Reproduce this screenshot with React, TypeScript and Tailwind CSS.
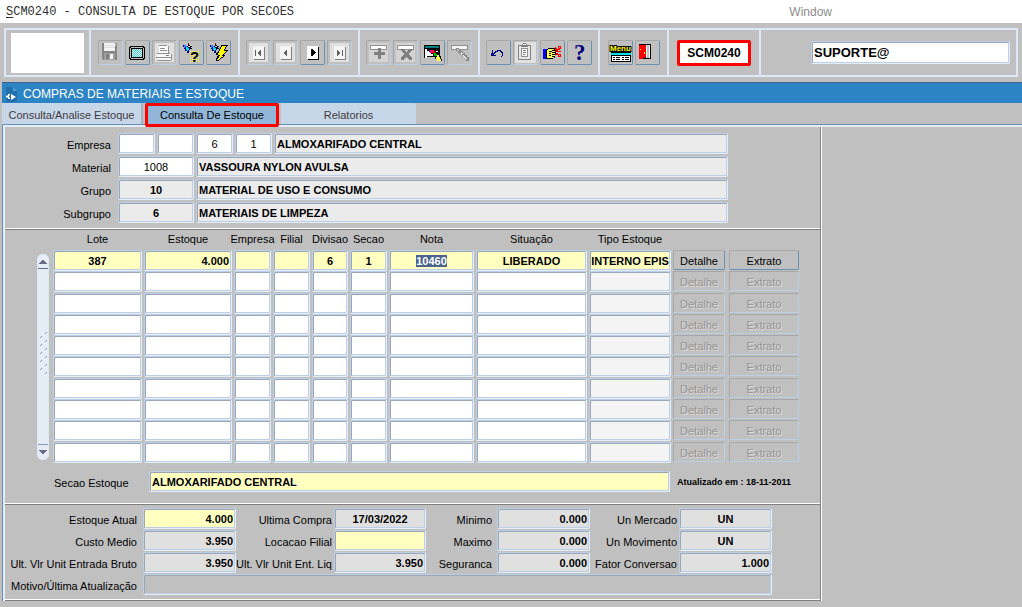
import { useEffect, useRef, type InputHTMLAttributes, type ReactNode } from "react"
import clsx from "clsx"

type Align = "left" | "center" | "right"

interface FieldProps extends InputHTMLAttributes<HTMLInputElement> {
  align?: Align
  ref?: React.Ref<HTMLInputElement>
}

const alignClass: Record<Align, string> = {
  left: "px-[2px] text-left",
  center: "px-0 text-center",
  right: "px-[2px] text-right",
}

function Field({ align = "left", className, ...props }: FieldProps) {
  return (
    <input
      type="text"
      {...props}
      className={clsx(
        "block h-[21px] min-w-0 rounded-[2px] border border-t-[#bccfe6] border-l-[#bccfe6] border-r-[#e6eefa] border-b-[#e6eefa] text-[11px] text-black outline-none",
        "shadow-[inset_1px_1px_0_#9ca6b4,inset_-1px_-1px_0_#bccfe6]",
        alignClass[align],
        className,
      )}
    />
  )
}

function Icon({ children }: { children: ReactNode }) {
  return (
    <svg width="23" height="23" viewBox="0 0 23 23" shapeRendering="crispEdges" aria-hidden="true">
      {children}
    </svg>
  )
}

function ToolButton({ label, disabled, children }: { label: string; disabled?: boolean; children: ReactNode }) {
  return (
    <button
      type="button"
      aria-label={label}
      disabled={disabled}
      className={clsx(
        "h-[25px] w-[25px] rounded-[2px] border border-t-[#a6a6a6] border-l-[#a6a6a6]",
        disabled ? "border-r-[#bccfe6] border-b-[#bccfe6]" : "border-r-[#6a8fb5] border-b-[#6a8fb5]",
      )}
    >
      <Icon>{children}</Icon>
    </button>
  )
}

function ToolGroup({ width, children }: { width: string; children: ReactNode }) {
  return (
    <div className={clsx("flex items-center justify-center gap-[2px] border-r-2 border-[#dce8f6]", width)}>
      {children}
    </div>
  )
}

function NavGlyph({ active, path }: { active?: boolean; path: string }) {
  return (
    <>
      {!active && <rect x="2" y="2" width="19" height="19" fill="#e0e0e0" />}
      <rect x="7" y="6" width="11" height="13" fill={active ? "#000" : "#808080"} />
      <rect x="6" y="5" width="11" height="13" fill={active ? "#fff" : "#f4f4f4"} />
      <path d={path} fill={active ? "#000" : "#606060"} />
    </>
  )
}

function Torch() {
  return (
    <>
      <path d="M3 4h3v1h2v1h2v3h-1v3h-2v-2h-2v-2h-1v-2h-1z" fill="#000080" />
      <path d="M4 4h2v1h1v1h-2v1h-1z" fill="#4080ff" />
      <path d="M6 6h2v1h1v2h-1v1h-1v-1h-1z" fill="#00e0e0" />
      <path d="M6 10h1v1h-1z" fill="#fff" />
      <path d="M8 3h1v1h1v1h2v1h-1v1h1v1h-2v-1h-1v-2h-1z" fill="#000" />
      <path d="M9 5h1v1h-1zM11 4h1v1h-1z" fill="#e0e0e0" />
      <path d="M8 2h1v1h-1z" fill="#e00000" />
    </>
  )
}

function Toolbar() {
  return (
    <div className="px-1 py-[5px]">
      <div className="flex h-[49px] border-2 border-[#dce8f6]">
        <div className="flex items-center border-r-2 border-[#dce8f6] px-[5px]">
          <div className="h-10 w-[73px] bg-white" />
        </div>
        <ToolGroup width="w-[149px]">
          <ToolButton label="Salvar" disabled>
            <path d="M3 2h15v17h-14v-1h-1z" fill="#858585" />
            <rect x="5" y="2" width="11" height="8" fill="#f4f4f4" />
            <path d="M5 4.500h11M5 6.500h11" stroke="#dcdcdc" />
            <rect x="16" y="3" width="1" height="2" fill="#d0d0d0" />
            <rect x="5" y="12" width="11" height="7" fill="#a0a0a0" />
            <rect x="7" y="13" width="3" height="5" fill="#808080" />
            <rect x="11" y="13" width="3" height="5" fill="#f4f4f4" />
          </ToolButton>
          <ToolButton label="Tela">
            <path d="M4 5h14v1h1v12h-1v1h-14v-1h-1v-12h1z" fill="#000" />
            <path d="M5 6h12v1h1v10h-1v1h-12v-1h-1v-10h1z" fill="#c0c0c0" />
            <rect x="5" y="7" width="12" height="10" fill="#000" />
            <rect x="6" y="8" width="10" height="8" fill="#e8ffff" />
            {[0, 1, 2, 3, 4, 5, 6, 7].map((y) =>
              [0, 2, 4, 6, 8].map((x) => (
                <rect key={`${x}-${y}`} x={6 + x + (y % 2)} y={8 + y} width="1" height="1" fill="#40d0d8" />
              )),
            )}
          </ToolButton>
          <ToolButton label="Imprimir" disabled>
            <rect x="2" y="2" width="19" height="19" fill="#e0e0e0" />
            <path d="M6 4h9v1h1v7h-10z" fill="#fff" />
            <path d="M6 4.500h8M7 7.500h5M7 9.500h7M15.500 5v7" stroke="#909090" />
            <path d="M4 12h13v1h2v4h-1v2h-14z" fill="#f8f8f8" />
            <path d="M4 12.500h13M3 16.500h16M4 19.500h14M18.500 13v6" stroke="#909090" />
            <path d="M13 14.500h3" stroke="#808080" />
          </ToolButton>
          <ToolButton label="Entrar consulta">
            <Torch />
            {[0, 2, 4, 6, 8, 10].map((y) =>
              [0, 2, 4, 6, 8].map((x) => (
                <rect key={`${x}-${y}`} x={10 + x} y={10 + y} width="1" height="1" fill="#ffff00" />
              )),
            )}
            <text x="10" y="21" fontSize="15" fontWeight="700" fill="#000">
              ?
            </text>
          </ToolButton>
          <ToolButton label="Executar consulta">
            <Torch />
            <path d="M14 4h7v1h-1v1h-1v2h-1v1h3v1h-1v1h-1v1h-1v1h-1v1h1v1h-1v1h-1v1h-2v1h-1v1h-1v1h-3v-3h1v-2h1v-1h-2v-2h1v-1h1v-1h1v-2h1v-2h1z" fill="#000" />
            <path d="M15 5h4v1h-1v2h-1v2h2v1h-1v1h-1v1h-1v1h-1v1h1v1h-2v1h-1v1h-1v1h-2v-1h1v-1h1v-2h1v-1h-2v-2h1v-2h1v-2h1v-2h1z" fill="#ffff00" />
          </ToolButton>
        </ToolGroup>
        <ToolGroup width="w-[120px]">
          <ToolButton label="Primeiro registro" disabled>
            <NavGlyph path="M8 9h1v6h-1zM14 9v6h-1v-1h-1v-1h-1v-2h1v-1h1v-1z" />
          </ToolButton>
          <ToolButton label="Registro anterior" disabled>
            <NavGlyph path="M13 9v6h-1v-1h-1v-1h-1v-2h1v-1h1v-1z" />
          </ToolButton>
          <ToolButton label="Próximo registro">
            <NavGlyph active path="M10 8h2v1h1v1h1v1h1v1h-1v1h-1v1h-1v1h-2z" />
          </ToolButton>
          <ToolButton label="Último registro" disabled>
            <NavGlyph path="M9 9h1v1h1v1h1v2h-1v1h-1v1h-1zM14 9h1v6h-1z" />
          </ToolButton>
        </ToolGroup>
        <ToolGroup width="w-[120px]">
          <ToolButton label="Inserir registro" disabled>
            <rect x="2" y="2" width="19" height="19" fill="#d4d4d4" />
            <path d="M3 4h17v5h-17z" fill="#909090" />
            <path d="M4 5h15v3h-15z" fill="#fff" />
            <path d="M11 7h3v4h4v3h-4v4h-3v-4h-4v-3h4z" fill="#808080" />
          </ToolButton>
          <ToolButton label="Excluir registro" disabled>
            <rect x="2" y="2" width="19" height="19" fill="#d4d4d4" />
            <path d="M3 4h17v5h-17z" fill="#909090" />
            <path d="M4 5h15v3h-15z" fill="#fff" />
            <path d="M7 8h3v1h1v1h1v1h1v-1h1v-1h1v-1h3v2h-1v1h-1v1h-1v2h1v1h1v1h1v3h-3v-1h-1v-1h-1v-1h-1v1h-1v1h-1v1h-3v-3h1v-1h1v-1h1v-2h-1v-1h-1v-1h-1z" fill="#808080" />
          </ToolButton>
          <ToolButton label="Limpar registro">
            <path d="M3 4h16v5h-16zM3 9h1v8h-1zM6 8h13v8h-13z" fill="#000" />
            <rect x="4" y="5" width="14" height="2" fill="#008080" />
            <rect x="4" y="8" width="2" height="9" fill="#fff" />
            <rect x="6" y="10" width="11" height="5" fill="#fff" />
            <path d="M9 8h4v1h2v2h2v2h2v2h1v3h1v2h-5v-2h-2v-3h-2v-2h-2v-2h-2v-2h1z" fill="#000" />
            <path d="M9 9h3v3h-3z" fill="#ff00a0" />
            <path d="M12 9h1v1h1v3h-2v-1h-2v-1h2z" fill="#ff0000" />
            <path d="M13 12h2v1h1v2h-3z" fill="#00c000" />
            <path d="M16 14h2v2h1v2h1v2h-4v-2h-1v-2h1z" fill="#ffff40" />
          </ToolButton>
          <ToolButton label="Pesquisar" disabled>
            <path d="M3 4h17v5h-17z" fill="#909090" />
            <path d="M4 5h15v3h-15z" fill="#f4f4f4" />
            <path d="M8 7h3v1h2v2h2v2h2v2h2v2h2v4h-3v-2h-2v-2h-2v-2h-2v-2h-2v-2h-2z" fill="#8a8a8a" />
            <path d="M9 8h1v1h1v1h-1v-1h-1zM13 11h1v1h1v1h-1v1h-1zM15 14h1v1h1v1h1v1h1v1h-2v-1h-1v-1h-1z" fill="#e8e8e8" />
          </ToolButton>
        </ToolGroup>
        <ToolGroup width="w-[120px]">
          <ToolButton label="Desfazer">
            <path
              d="M5 9h1v3h1v-1h1v-1h2v-1h4v1h1v1h1v4h-1v1h-1v-1h1v-3h-1v-1h-1v-1h-2v1h-2v1h-1v1h-1v1h2v1h-5z"
              fill="#000080"
            />
          </ToolButton>
          <ToolButton label="Colar" disabled>
            <rect x="1" y="1" width="21" height="21" fill="#e0e0e0" />
            <path d="M4 4h4v-1h1v-1h3v1h1v1h4v15h-13z" fill="#808080" />
            <rect x="5" y="5" width="11" height="13" fill="#e8e8e8" />
            <path d="M7 7h7v9h-7z" fill="#909090" />
            <path d="M8 8h5v7h-5z" fill="#f8f8f8" />
            <path d="M7 5.500h7M9 9.500h3M9 11.500h3M9 13.500h2" stroke="#808080" />
            <rect x="9" y="3" width="3" height="1" fill="#f4f4f4" />
          </ToolButton>
          <ToolButton label="Recortar">
            <path d="M2 8h4v10h-4z" fill="#0000ff" />
            <path d="M5 9h1v-1h1v-1h7v1h3v3h-2v3h-1v3h-2v1h-7z" fill="#000" />
            <path d="M6 9h1v-1h6v1h-2v1h5v1h-5v1h3v1h-3v1h3v1h-3v1h2v1h-7z" fill="#ffff60" />
            <path d="M8 10.500h3M8 12.500h2M8 14.500h2" stroke="#000" />
            <path d="M14 6h1v1h1v1h1v-3h3v3h-1v1h-2v1h3v1h-6v-1h1v-1h-1zM15 12h2v1h3v3h-3v-2h-2z" fill="#ff0000" />
            <path d="M18 6h1v1h-1zM18 14h1v1h-1z" fill="#c0c0c0" />
          </ToolButton>
          <ToolButton label="Ajuda">
            <text x="6" y="19" fontSize="23" fontWeight="700" fill="#000080" fontFamily="Liberation Serif, serif">
              ?
            </text>
          </ToolButton>
        </ToolGroup>
        <ToolGroup width="w-[69px]">
          <ToolButton label="Menu">
            <text
              x="1"
              y="10"
              fontSize="8"
              fontWeight="700"
              fill="#ffff00"
              stroke="#000"
              strokeWidth="2"
              paintOrder="stroke"
            >
              Menu
            </text>
            <rect x="2" y="11" width="20" height="1" fill="#000" />
            <rect x="2" y="12" width="20" height="2" fill="#00e0e0" />
            <rect x="2" y="14" width="20" height="7" fill="#000" />
            <path d="M3 15h18v5h-18z" fill="#fff" />
            <path d="M4 16.500h2M7 16.500h4M13 16.500h2M16 16.500h4M4 18.500h2M7 18.500h4M13 18.500h2M16 18.500h4" stroke="#000" />
          </ToolButton>
          <ToolButton label="Sair">
            <rect x="3" y="3" width="12" height="15" fill="#000" />
            <rect x="10" y="4" width="4" height="13" fill="#fff" />
            <rect x="11" y="4" width="2" height="13" fill="#c0c0c0" />
            <path d="M3 4h7v12h-1v1h-2v1h-4z" fill="#ff0000" />
            <path d="M4 8h1v1h-1zM8 11h1v2h-1z" fill="#ffff00" />
          </ToolButton>
        </ToolGroup>
        <div className="flex w-[92px] items-center justify-center border-r-2 border-[#dce8f6]">
          <input
            type="text"
            aria-label="Programa"
            defaultValue="SCM0240"
            className="h-[26px] w-[74px] rounded-[2px] border-3 border-[#fe0000] bg-white text-center text-[12px] font-bold outline-none"
          />
        </div>
        <div className="flex flex-1 items-center pr-[6px] pl-[50px]">
          <input
            type="text"
            aria-label="Usuário"
            defaultValue="SUPORTE@"
            className="h-[23px] w-full rounded-[2px] border border-t-[#bccfe6] border-l-[#bccfe6] border-r-[#e6eefa] border-b-[#e6eefa] bg-white px-[2px] text-[13px] font-bold shadow-[inset_1px_1px_0_#9ca6b4,inset_-1px_-1px_0_#bccfe6] outline-none"
          />
        </div>
      </div>
    </div>
  )
}

function Label({ htmlFor, className, children }: { htmlFor: string; className?: string; children: ReactNode }) {
  return (
    <label htmlFor={htmlFor} className={clsx("pt-[2px] whitespace-nowrap", className)}>
      {children}
    </label>
  )
}

function Rule() {
  return <hr className="h-[2px] border-0 border-t border-b border-t-white border-b-[#808080]" />
}

function HeaderRow({ id, label, children }: { id: string; label: string; children: ReactNode }) {
  return (
    <div className="flex items-center gap-[2px]">
      <Label htmlFor={id} className="w-[111px] pr-[5px] text-right">
        {label}
      </Label>
      {children}
    </div>
  )
}

function MaterialHeader() {
  return (
    <div className="flex w-[723px] flex-col gap-[2px] pt-[6px] pb-[5px]">
      <HeaderRow id="empresa" label="Empresa">
        <Field id="empresa" className="w-[37px] bg-white" />
        <Field aria-label="Filial" className="w-[37px] bg-white" />
        <Field aria-label="Divisao" align="center" defaultValue="6" className="w-[37px] bg-white" />
        <Field aria-label="Secao" align="center" defaultValue="1" className="w-[37px] bg-white" />
        <Field aria-label="Nome da secao" readOnly value="ALMOXARIFADO CENTRAL" className="flex-1 bg-[#ebebeb] font-bold" />
      </HeaderRow>
      <HeaderRow id="material" label="Material">
        <Field id="material" align="center" defaultValue="1008" className="w-[76px] bg-white" />
        <Field aria-label="Nome do material" readOnly value="VASSOURA NYLON AVULSA" className="flex-1 bg-[#ebebeb] font-bold" />
      </HeaderRow>
      <HeaderRow id="grupo" label="Grupo">
        <Field id="grupo" align="center" readOnly value="10" className="w-[76px] bg-[#ebebeb] font-bold" />
        <Field aria-label="Nome do grupo" readOnly value="MATERIAL DE USO E CONSUMO" className="flex-1 bg-[#ebebeb] font-bold" />
      </HeaderRow>
      <HeaderRow id="subgrupo" label="Subgrupo">
        <Field id="subgrupo" align="center" readOnly value="6" className="w-[76px] bg-[#ebebeb] font-bold" />
        <Field aria-label="Nome do subgrupo" readOnly value="MATERIAIS DE LIMPEZA" className="flex-1 bg-[#ebebeb] font-bold" />
      </HeaderRow>
    </div>
  )
}

const columns: { name: string; width: string; align: Align }[] = [
  { name: "Lote", width: "w-[91px]", align: "center" },
  { name: "Estoque", width: "w-[90px]", align: "right" },
  { name: "Empresa", width: "w-[39px]", align: "center" },
  { name: "Filial", width: "w-[39px]", align: "center" },
  { name: "Divisao", width: "w-[38px]", align: "center" },
  { name: "Secao", width: "w-[39px]", align: "center" },
  { name: "Nota", width: "w-[87px]", align: "center" },
  { name: "Situação", width: "w-[113px]", align: "center" },
  { name: "Tipo Estoque", width: "w-[84px]", align: "center" },
]

const firstRow = ["387", "4.000", "", "", "6", "1", "10460", "LIBERADO", "INTERNO EPIS"]
const rows = [firstRow, ...Array.from({ length: 9 }, () => columns.map(() => ""))]

function RowButton({ disabled, className, children }: { disabled: boolean; className: string; children: ReactNode }) {
  return (
    <button
      type="button"
      disabled={disabled}
      className={clsx(
        "block h-5 rounded-[2px] border border-t-[#a6a6a6] border-l-[#a6a6a6] pt-[2px]",
        disabled
          ? "border-r-[#bccfe6] border-b-[#bccfe6] text-[#949494] [text-shadow:1px_1px_0_#dcdcdc]"
          : "border-r-[#6a8fb5] border-b-[#6a8fb5] text-black",
        className,
      )}
    >
      {children}
    </button>
  )
}

function ScrollBar() {
  return (
    <div className="mt-6 flex h-[206px] w-3 flex-col rounded-[5px] border border-[#dce8f6] bg-[#e6ecf4]">
      <button type="button" aria-label="Rolar para cima" className="flex h-[14px] items-center justify-center border-b border-[#6b6b85]">
        <svg width="8" height="4" viewBox="0 0 8 4" shapeRendering="crispEdges">
          <path d="M3 0h2v1h1v1h1v1h1v1H0V3h1V2h1V1h1z" fill="#6b6b85" />
        </svg>
      </button>
      <div className="flex flex-1 items-start justify-center pt-[63px]">
        <svg width="8" height="44" viewBox="0 0 8 44" shapeRendering="crispEdges">
          {[0, 1, 2, 3, 4, 5].map((i) => (
            <path key={i} d={`M6 ${i * 8 + 1}h1v-1h1v1h-1v1h-1z`} fill="#7f9cc0" />
          ))}
          {[0, 1, 2, 3, 4].map((i) => (
            <path key={i} d={`M1 ${i * 8 + 5}h1v-1h1v1h-1v1h-1z`} fill="#7f9cc0" />
          ))}
        </svg>
      </div>
      <button type="button" aria-label="Rolar para baixo" className="flex h-[15px] items-center justify-center border-t border-[#7f9cc0]">
        <svg width="8" height="4" viewBox="0 0 8 4" shapeRendering="crispEdges">
          <path d="M0 0h8v1H7v1H6v1H5v1H3V3H2V2H1V1H0z" fill="#6b6b85" />
        </svg>
      </button>
    </div>
  )
}

function StockTable() {
  const notaRef = useRef<HTMLInputElement>(null)

  useEffect(() => {
    notaRef.current?.focus()
    notaRef.current?.select()
  }, [])

  return (
    <div className="flex items-start gap-1 pl-8">
      <ScrollBar />
      <table className="h-[233px] w-[746px] table-fixed border-collapse">
        <thead>
          <tr className="h-5">
            {columns.map((col) => (
              <th key={col.name} scope="col" className={clsx("p-0 pr-[2px] pb-[2px] font-normal", col.width)}>
                <div className="flex justify-center whitespace-nowrap">{col.name}</div>
              </th>
            ))}
            <td className="w-[56px] p-0" />
            <td className="w-[70px] p-0" />
          </tr>
        </thead>
        <tbody>
          {rows.map((row, r) => (
            <tr key={r}>
              {row.map((value, c) => (
                <td key={c} className="p-0 pr-[2px] align-top">
                  <Field
                    ref={r === 0 && columns[c].name === "Nota" ? notaRef : undefined}
                    aria-label={`${columns[c].name} ${r + 1}`}
                    align={columns[c].align}
                    defaultValue={value}
                    className={clsx(
                      "w-full font-bold selection:bg-[#4a648f] selection:text-white",
                      r === 0 ? "bg-[#ffffc0]" : c === 8 ? "bg-[#f4f4f4]" : "bg-white",
                    )}
                  />
                </td>
              ))}
              <td className="p-0 align-top">
                <RowButton disabled={r > 0} className="w-[52px]">
                  Detalhe
                </RowButton>
              </td>
              <td className="p-0 align-top">
                <RowButton disabled={r > 0} className="w-[70px]">
                  Extrato
                </RowButton>
              </td>
            </tr>
          ))}
        </tbody>
      </table>
    </div>
  )
}

function Totals() {
  return (
    <div className="grid w-[767px] grid-cols-[138px_93px_98px_92px_71px_93px_89px_93px] items-center gap-y-[1px] pt-[3px] pb-1 text-right">
      <Label htmlFor="estoque-atual" className="pr-[6px]">Estoque Atual</Label>
      <Field id="estoque-atual" align="right" readOnly value="4.000" className="bg-[#ffffc0] font-bold" />
      <Label htmlFor="ultima-compra" className="pr-[2px]">Ultima Compra</Label>
      <Field id="ultima-compra" align="center" readOnly value="17/03/2022" className="bg-[#e0e0e0] font-bold" />
      <Label htmlFor="minimo" className="pr-[5px]">Minimo</Label>
      <Field id="minimo" align="right" readOnly value="0.000" className="bg-[#e0e0e0] font-bold" />
      <Label htmlFor="un-mercado" className="pr-[2px]">Un Mercado</Label>
      <Field id="un-mercado" align="center" readOnly value="UN" className="bg-[#e0e0e0] font-bold" />

      <Label htmlFor="custo-medio" className="pr-[6px]">Custo Medio</Label>
      <Field id="custo-medio" align="right" readOnly value="3.950" className="bg-[#e0e0e0] font-bold" />
      <Label htmlFor="locacao" className="pr-[2px]">Locacao Filial</Label>
      <Field id="locacao" className="bg-[#ffffc0] font-bold" />
      <Label htmlFor="maximo" className="pr-[5px]">Maximo</Label>
      <Field id="maximo" align="right" readOnly value="0.000" className="bg-[#e0e0e0] font-bold" />
      <Label htmlFor="un-movimento" className="pr-[2px]">Un Movimento</Label>
      <Field id="un-movimento" align="center" readOnly value="UN" className="bg-[#e0e0e0] font-bold" />

      <Label htmlFor="unit-bruto" className="pr-[6px]">Ult. Vlr Unit Entrada Bruto</Label>
      <Field id="unit-bruto" align="right" readOnly value="3.950" className="bg-[#e0e0e0] font-bold" />
      <Label htmlFor="unit-liq" className="pr-[2px]">Ult. Vlr Unit Ent. Liq</Label>
      <Field id="unit-liq" align="right" readOnly value="3.950" className="bg-[#e0e0e0] font-bold" />
      <Label htmlFor="seguranca" className="pr-[5px]">Seguranca</Label>
      <Field id="seguranca" align="right" readOnly value="0.000" className="bg-[#e0e0e0] font-bold" />
      <Label htmlFor="fator" className="pr-[2px]">Fator Conversao</Label>
      <Field id="fator" align="right" readOnly value="1.000" className="bg-[#e0e0e0] font-bold" />

      <Label htmlFor="motivo" className="pr-[6px]">Motivo/Última Atualização</Label>
      <Field id="motivo" readOnly value="" className="col-span-7 bg-[#c0c0c0]" />
    </div>
  )
}

export default function App() {
  return (
    <div className="min-h-screen bg-[#c0c0c0] font-['Liberation_Sans',Arial,sans-serif] text-[11px] leading-[14px] text-black">
      <header className="flex h-[23px] items-center bg-white pr-[190px] pl-[6px] text-[12px]">
        <h1 className="font-['Liberation_Mono','Courier_New',monospace] text-[#303030]">
          <span className="underline underline-offset-2">S</span>CM0240 - CONSULTA DE ESTOQUE POR SECOES
        </h1>
        <button type="button" className="ml-auto text-[#8c8c8c]">
          Window
        </button>
      </header>

      <Toolbar />

      <main className="ml-[2px]">
        <div className="flex h-[21px] items-center gap-[6px] border-t border-[#41618f] bg-[#2c84c4] pt-[2px] pl-1 text-[12px] text-white">
          <svg width="11" height="15" viewBox="0 0 11 15" aria-hidden="true">
            <path d="M0 0h7l4 4v11H0z" fill="#2470ae" />
            <path d="M7 0l4 4H7z" fill="#4d9fd6" />
            <path d="M4 7H2v1.500H0v2h2V12h2v-1.500H3v-2h1zM5 7l5 3-5 3z" fill="#fff" />
          </svg>
          <h2>COMPRAS DE MATERIAIS E ESTOQUE</h2>
        </div>

        <div role="tablist" className="flex h-[21px] items-start text-[#3c3c3c]">
          <button type="button" role="tab" aria-selected="false" className="h-[21px] w-[141px] rounded-tr-[3px] border-r-2 border-[#a3b4c8] bg-[#c8d6ea] pt-[3px]">
            Consulta/Analise Estoque
          </button>
          <button type="button" role="tab" aria-selected="true" className="relative z-10 ml-[2px] h-6 w-[134px] rounded-[2px] border-3 border-[#fe0000] bg-[#92b6d8] text-black">
            Consulta De Estoque
          </button>
          <button type="button" role="tab" aria-selected="false" className="ml-[2px] h-[21px] w-[135px] rounded-tr-[3px] bg-[#c8d6ea] pt-[3px]">
            Relatorios
          </button>
        </div>

        <div className="border-t border-l border-[#6a8fb5]">
          <div className="border-t-2 border-l-2 border-[#e6eefa]">
            <div className="w-[817px] border-r border-white">
              <div className="border-r border-[#808080]">
                <MaterialHeader />
                <Rule />
                <StockTable />
                <div className="flex items-center pt-2 pb-[11px] pl-[49px]">
                  <Label htmlFor="secao-estoque" className="w-[95px]">
                    Secao Estoque
                  </Label>
                  <Field id="secao-estoque" readOnly value="ALMOXARIFADO CENTRAL" className="w-[521px] bg-[#ffffc0] font-bold" />
                  <p className="pl-[7px] text-[9px] font-bold">Atualizado em : 18-11-2011</p>
                </div>
                <Rule />
                <Totals />
                <Rule />
              </div>
            </div>
          </div>
        </div>
      </main>
    </div>
  )
}
